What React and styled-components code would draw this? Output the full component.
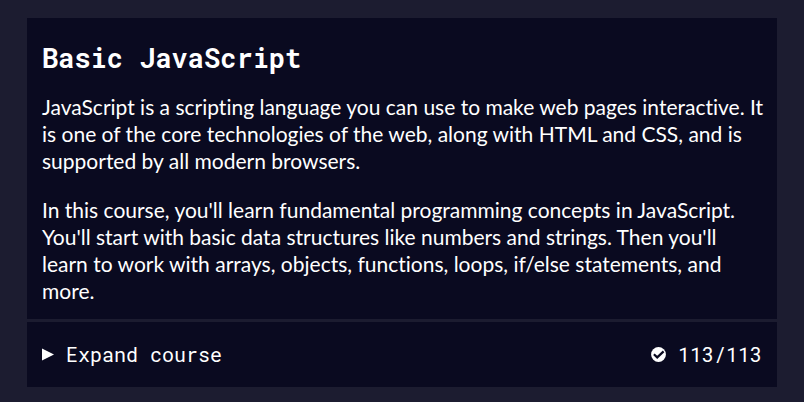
import React from "react";
import styled, { createGlobalStyle } from "styled-components";

const GlobalStyle = createGlobalStyle`
  *, *::before, *::after { box-sizing: border-box; }
  body {
    margin: 0;
    background: #1c1c30;
    color: #ffffff;
    font-family: Lato, sans-serif;
  }
`;

const mono = `"Roboto Mono", "Liberation Mono", monospace`;

const Page = styled.main`
  padding: 18px 27px 15px;
`;

const Course = styled.section`
  display: flex;
  flex-direction: column;
  gap: 3px;
`;

const Intro = styled.div`
  padding: 22px 12px 15px 15px;
  background: #0a0a20;
`;

const Title = styled.h2`
  margin: 0 0 17px;
  font: 700 27px/36px ${mono};
`;

const Description = styled.p`
  margin: 0 0 22px;
  font-size: 21px;
  line-height: 27px;
  font-variant-ligatures: none;

  &:last-child { margin-bottom: 0; }
`;

const ExpandButton = styled.button`
  display: flex;
  align-items: center;
  justify-content: space-between;
  width: 100%;
  padding: 19px 15px;
  border: 0;
  background: #0a0a20;
  color: inherit;
  font: 400 20px/27px ${mono};
  text-align: left;
  cursor: pointer;
`;

const Group = styled.span`
  display: flex;
  align-items: center;
  gap: 12px;
`;

const Icon = styled.svg`
  display: block;
  fill: currentColor;
`;

const CheckMark = styled.path`
  fill: none;
  stroke: #0a0a20;
  stroke-width: 2.2;
`;

export default function App() {
  return (
    <Page>
      <GlobalStyle />
      <Course>
        <Intro>
          <Title>Basic JavaScript</Title>
          <Description>
            JavaScript is a scripting language you can use to make web pages
            interactive. It is one of the core technologies of the web, along
            with HTML and CSS, and is supported by all modern browsers.
          </Description>
          <Description>
            In this course, you'll learn fundamental programming concepts in
            JavaScript. You'll start with basic data structures like numbers and
            strings. Then you'll learn to work with arrays, objects, functions,
            loops, if/else statements, and more.
          </Description>
        </Intro>
        <ExpandButton type="button" aria-expanded="false">
          <Group>
            <Icon width="12" height="13" viewBox="0 0 12 13" aria-hidden="true">
              <path d="M0 0.5 12 6.5 0 12.5Z" />
            </Icon>
            Expand course
          </Group>
          <Group>
            <Icon width="15" height="15" viewBox="0 0 15 15" aria-hidden="true">
              <circle cx="7.5" cy="7.5" r="7.4" />
              <CheckMark d="M2.9 7.3 6.2 10.4 12.6 4.4" />
            </Icon>
            113/113
          </Group>
        </ExpandButton>
      </Course>
    </Page>
  );
}
